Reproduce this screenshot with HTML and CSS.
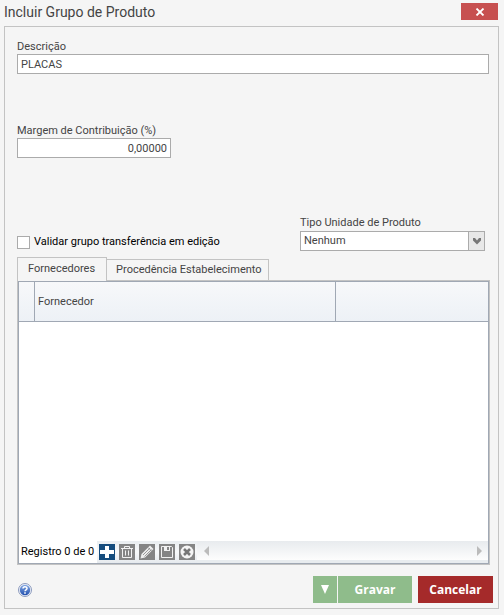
FILE: index.html
```html
<!DOCTYPE html>
<html lang="pt-BR">
<head>
  <meta charset="UTF-8">
  <meta name="viewport" content="width=device-width, initial-scale=1.0">
  <title>Incluir Grupo de Produto</title>
  <link rel="stylesheet" href="styles.css">
</head>
<body>
  <header class="titlebar">
    <h1>Incluir Grupo de Produto</h1>
    <button type="button" class="close" aria-label="Fechar">
      <svg width="10" height="8" viewBox="0 0 10 8"><path d="M1.500 .5l7 7M8.500 .5l-7 7" stroke="#fff" stroke-width="1.800"/></svg>
    </button>
  </header>

  <form class="window">
    <div class="field">
      <label for="descricao">Descrição</label>
      <input type="text" id="descricao" value="PLACAS">
    </div>

    <div class="field field-margem">
      <label for="margem">Margem de Contribuição (%)</label>
      <input type="text" id="margem" class="number" value="0,00000">
    </div>

    <div class="options">
      <label class="check" for="validar">
        <input type="checkbox" id="validar">
        Validar grupo transferência em edição
      </label>
      <div class="field field-tipo">
        <label for="tipo">Tipo Unidade de Produto</label>
        <div class="combo">
          <select id="tipo">
            <option>Nenhum</option>
          </select>
          <span class="combo-arrow">
            <svg width="8" height="7" viewBox="0 0 8 7"><path d="M0 0h2l2 2.500L6 0h2v2.500L4 6.500 0 2.500z" fill="#777"/></svg>
          </span>
        </div>
      </div>
    </div>

    <!-- Tabs -->
    <div class="tabs" role="tablist">
      <button type="button" class="tab active" role="tab" aria-selected="true">Fornecedores</button>
      <button type="button" class="tab" role="tab" aria-selected="false">Procedência Estabelecimento</button>
    </div>

    <div class="tab-page">
      <div class="grid">
        <table>
          <thead>
            <tr>
              <th class="col-marker"></th>
              <th class="col-name">Fornecedor</th>
              <th></th>
            </tr>
          </thead>
        </table>

        <!-- Record navigator -->
        <div class="navigator">
          <span class="nav-text">Registro 0 de 0</span>
          <div class="nav-buttons">
            <button type="button" aria-label="Adicionar">
              <svg width="16" height="16" viewBox="0 0 16 16"><path d="M0 0h16v16H0z" fill="#154c7d"/><path d="M6 2h4v4h5v4h-5v4H6v-4H1V6h5z" fill="#fff"/></svg>
            </button>
            <button type="button" aria-label="Excluir">
              <svg width="16" height="16" viewBox="0 0 16 16"><path d="M0 0h16v16H0z" fill="#858585"/><g fill="none" stroke="#f2f2f2"><path d="M2 4.500h12M5.500 4V2.500h5V4M3.500 5v8.500h9V5M6.500 6.500v5M9.500 6.500v5"/></g></svg>
            </button>
            <button type="button" aria-label="Editar">
              <svg width="16" height="16" viewBox="0 0 16 16"><path d="M0 0h16v16H0z" fill="#858585"/><path d="M1.500 14.500l1-4.500L11 1.500l3.500 3.500L6 13.500z" fill="#eee"/><path d="M4 11l7-7M5.500 12.500l7-7M9 3.500l3.500 3.500" stroke="#858585" stroke-width=".8"/></svg>
            </button>
            <button type="button" aria-label="Salvar">
              <svg width="16" height="16" viewBox="0 0 16 16"><path d="M0 0h16v16H0z" fill="#858585"/><path d="M2.500 2.500h10l1 1v10h-11z" fill="none" stroke="#f2f2f2"/><path d="M5 2h6v5H5z" fill="#f2f2f2"/><path d="M8 3h2v3H8z" fill="#858585"/></svg>
            </button>
            <button type="button" aria-label="Cancelar edição">
              <svg width="16" height="16" viewBox="0 0 16 16"><path d="M0 0h16v16H0z" fill="#858585"/><circle cx="8" cy="8" r="6.500" fill="#f4f4f4"/><path d="M5 5l6 6M11 5l-6 6" stroke="#777" stroke-width="2.600"/></svg>
            </button>
          </div>
          <div class="scrollbar">
            <button type="button" aria-label="Rolar para a esquerda"><svg width="5" height="10" viewBox="0 0 5 10"><path d="M5 0v10L0 5z" fill="#bbb"/></svg></button>
            <button type="button" aria-label="Rolar para a direita"><svg width="5" height="10" viewBox="0 0 5 10"><path d="M0 0v10l5-5z" fill="#bbb"/></svg></button>
          </div>
        </div>
      </div>
    </div>

    <!-- Actions -->
    <footer class="actions">
      <button type="button" class="help" aria-label="Ajuda">
        <svg width="14" height="14" viewBox="0 0 14 14">
          <defs>
            <linearGradient id="ball" x1="0" y1="0" x2="0" y2="1"><stop offset="0" stop-color="#83a8e4"/><stop offset="1" stop-color="#2250ae"/></linearGradient>
          </defs>
          <circle cx="7" cy="7" r="6.500" fill="#eef2fa" stroke="#8c9abc"/>
          <circle cx="7" cy="7" r="5.200" fill="url(#ball)"/>
          <path d="M5 5.600C5 3.200 9 3.200 9 5.500 9 6.800 7 6.800 7 8.300" fill="none" stroke="#fff" stroke-width="1.500"/>
          <path d="M6.200 9.200h1.600v1.500H6.200z" fill="#fff"/>
        </svg>
      </button>
      <button type="button" class="btn save-menu" aria-label="Mais opções">
        <svg width="8" height="9" viewBox="0 0 8 9"><path d="M0 0h8L4 9z" fill="#fff"/></svg>
      </button>
      <button type="submit" class="btn save">Gravar</button>
      <button type="button" class="btn cancel">Cancelar</button>
    </footer>
  </form>
</body>
</html>
```
FILE: styles.css
```css
* {
  box-sizing: border-box;
}

body {
  display: flex;
  flex-direction: column;
  min-height: 100vh;
  margin: 0;
  padding: 0 5px 6px 4px;
  background-color: #f5f5f5;
  color: #444;
  font-family: Roboto, Tahoma, sans-serif;
  font-size: 11px;
  line-height: 14px;
}

button,
input,
select {
  margin: 0;
  padding: 0;
  border: 0;
  border-radius: 0;
  font: inherit;
  color: inherit;
}

button {
  background: none;
  cursor: pointer;
}

svg {
  display: block;
}

.titlebar {
  display: flex;
  justify-content: space-between;
  align-items: flex-start;
  height: 26px;
  padding-top: 3px;
}

.titlebar h1 {
  margin: 0;
  font-size: 14px;
  font-weight: normal;
  line-height: 18px;
}

.close {
  display: flex;
  align-items: center;
  justify-content: center;
  width: 37px;
  height: 17px;
  margin-right: 1px;
  background-color: #c75050;
}

.window {
  display: flex;
  flex-direction: column;
  flex: 1;
  padding: 13px 5px 5px 12px;
  border: 1px solid #c3c3c3;
}

.field {
  display: flex;
  flex-direction: column;
  margin-right: 4px;
}

.field input,
.combo {
  height: 20px;
  border: 1px solid #ababab;
  background-color: #fff;
}

.field input {
  padding: 0 3px;
}

.field-margem {
  width: 154px;
  margin-top: 50px;
}

.number {
  text-align: right;
}

.options {
  display: flex;
  justify-content: space-between;
  align-items: flex-end;
  margin-top: 58px;
}

.check {
  display: flex;
  align-items: center;
  gap: 4px;
  margin-bottom: 2px;
  color: #000;
}

.check input {
  appearance: none;
  width: 13px;
  height: 13px;
  border: 1px solid #ababab;
  background-color: #fff;
}

.check input:checked {
  background-color: #777;
}

.field-tipo {
  width: 185px;
  margin-right: 8px;
}

.field-tipo label {
  margin-bottom: 1px;
}

.combo {
  position: relative;
}

.combo select {
  appearance: none;
  width: 100%;
  height: 18px;
  padding: 0 20px 0 3px;
  background: none;
}

.combo-arrow {
  position: absolute;
  top: 0;
  right: 0;
  display: flex;
  align-items: center;
  justify-content: center;
  width: 16px;
  height: 18px;
  border-left: 1px solid #ababab;
  background-color: #e8e8e8;
  pointer-events: none;
}

/* Tabs */
.tabs {
  display: flex;
  align-items: flex-end;
  margin-top: 6px;
}

.tab {
  height: 21px;
  padding: 0 6px 0 9px;
  border: 1px solid #c3c3c3;
  border-width: 1px 1px 0 0;
}

.tab.active {
  z-index: 1;
  height: 24px;
  margin-bottom: -1px;
  padding: 0 11px 2px 10px;
  border-left-width: 1px;
  background-color: #f5f5f5;
}

.tab-page {
  display: flex;
  flex: 1;
  margin-right: 3px;
  border: 1px solid #c3c3c3;
}

.grid {
  display: flex;
  flex-direction: column;
  justify-content: space-between;
  flex: 1;
  border: 1px solid #a0a8b4;
  background-color: #fff;
}

.grid table {
  width: 100%;
  border-spacing: 0;
  table-layout: fixed;
}

.grid th {
  height: 40px;
  padding: 0 3px;
  border-right: 1px solid #a0a8b4;
  border-bottom: 1px solid #a0a8b4;
  background-image: linear-gradient(#f7f8fa, #edf1f6);
  font-weight: normal;
  text-align: left;
}

.grid th:last-child {
  border-right: 0;
}

.grid .col-marker {
  width: 16px;
  padding: 0;
}

.grid .col-name {
  width: 301px;
}

.navigator {
  display: flex;
  height: 22px;
  color: #000;
}

.nav-text {
  padding: 4px 3px 0 2px;
}

.nav-buttons {
  display: flex;
  align-items: flex-start;
  gap: 4px;
  padding: 3px 2px 0;
  background-image: linear-gradient(#e9edf0, #f8f9fa 50%, #e6eaee);
}

.scrollbar {
  display: flex;
  justify-content: space-between;
  align-items: center;
  flex: 1;
  padding: 0 6px 0 7px;
  border-bottom: 3px solid #e8ecef;
  background-image: linear-gradient(#e8ebee, #fdfdfd);
}

/* Actions */
.actions {
  display: flex;
  align-items: center;
  margin-top: 11px;
}

.help {
  margin: 0 auto 0 1px;
}

.btn {
  display: flex;
  align-items: center;
  justify-content: center;
  height: 27px;
  color: #fff;
  font-family: "Open Sans", "Segoe UI", sans-serif;
  font-size: 12px;
  font-weight: bold;
}

.save-menu {
  width: 24px;
  margin-right: 1px;
  background-color: #8fbc8b;
}

.save {
  width: 74px;
  margin-right: 6px;
  background-color: #8fbc8b;
}

.cancel {
  width: 75px;
  background-color: #a52a2a;
}
```
